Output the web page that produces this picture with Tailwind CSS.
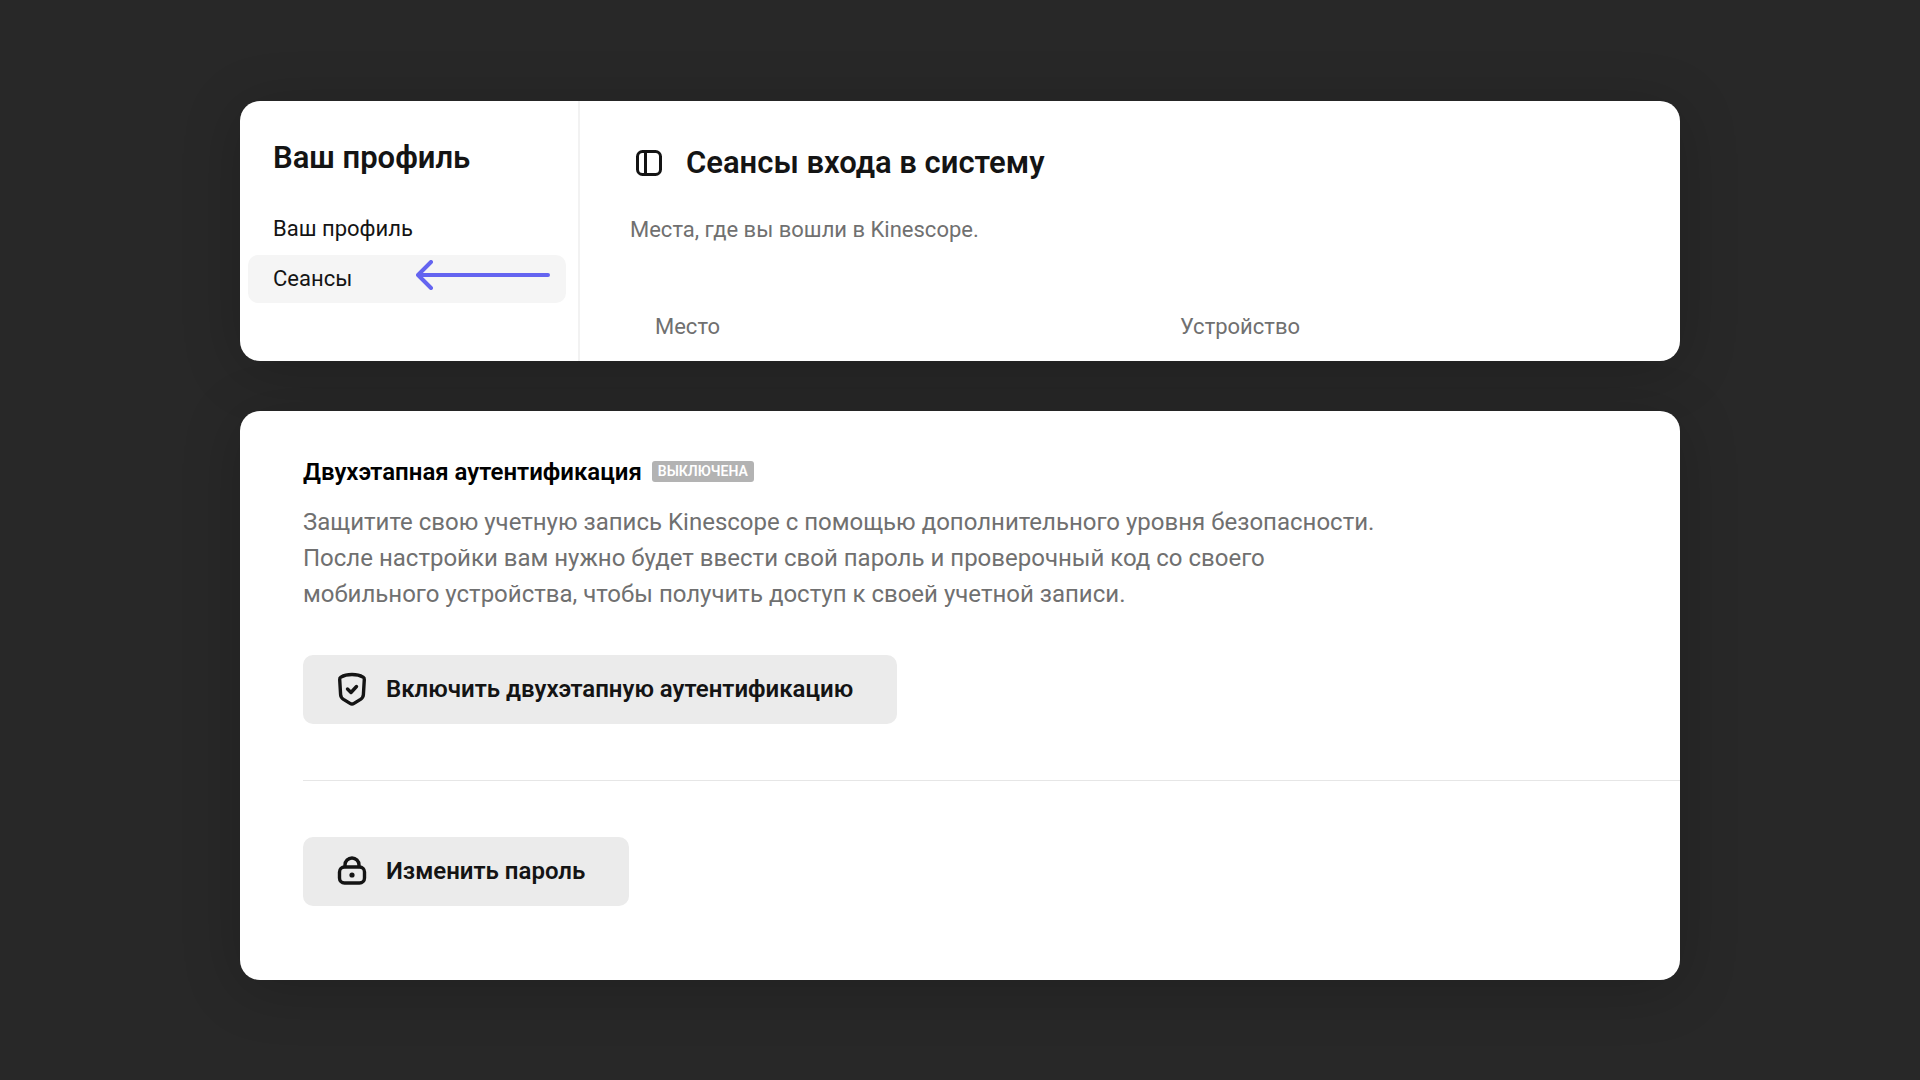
<!DOCTYPE html>
<html lang="ru">

<head>
    <meta charset="UTF-8">
    <meta name="viewport" content="width=device-width, initial-scale=1.0">
    <title>Сеансы входа в систему</title>
    <script src="https://cdn.jsdelivr.net/npm/@tailwindcss/browser@4"></script>
</head>

<body class="flex min-h-screen flex-col items-center justify-center gap-[50px] bg-[#282828] font-[Roboto,sans-serif] text-[#141414]">

    <!-- Profile: sidebar and sessions -->
    <section class="flex w-3/4 overflow-hidden rounded-[20px] bg-white shadow-[0_8px_60px_rgba(0,0,0,0.2)]">
        <aside class="w-[340px] shrink-0 border-r-2 border-[#f2f2f2] pt-9 pr-3 pb-[58px] pl-2">
            <h2 class="px-[25px] text-[31px] leading-[42px] font-semibold">Ваш профиль</h2>
            <nav class="mt-[26px] flex flex-col gap-0.5">
                <a href="#profile" class="flex h-12 items-center rounded-[10px] px-[25px] text-[22px]">Ваш профиль</a>
                <a href="#sessions" class="relative flex h-12 items-center rounded-[10px] bg-[#f5f5f5] px-[25px] text-[22px]">
                    Сеансы
                    <svg class="absolute top-[5px] right-4" width="134" height="30" viewBox="0 0 134 30" fill="none" stroke="#6464f0" stroke-width="4" stroke-linecap="round" stroke-linejoin="round" aria-hidden="true">
                        <path d="M15 2 2 15l13 13M3 15h129" />
                    </svg>
                </a>
            </nav>
        </aside>

        <main class="min-w-0 grow pt-[39px] pl-[50px]">
            <div class="flex items-center gap-6">
                <button type="button" aria-label="Боковая панель" class="pl-1.5">
                    <svg width="26" height="26" viewBox="1 1 26 26" fill="none" stroke="currentColor" stroke-width="3">
                        <rect x="2.5" y="2.5" width="23" height="23" rx="5" />
                        <path d="M10.5 2.5v23" />
                    </svg>
                </button>
                <h1 class="text-[31px] leading-[46px] font-semibold">Сеансы входа в систему</h1>
            </div>
            <p class="mt-7 text-[22px] leading-8 text-[#707070]">Места, где вы вошли в Kinescope.</p>
            <table class="mt-[65px] w-full table-fixed text-left text-[22px] leading-8 text-[#707070]">
                <thead>
                    <tr>
                        <th scope="col" class="w-[525px] pl-[25px] font-normal">Место</th>
                        <th scope="col" class="pl-[25px] font-normal">Устройство</th>
                    </tr>
                </thead>
            </table>
        </main>
    </section>

    <!-- Two-factor authentication and password -->
    <section class="w-3/4 rounded-[20px] bg-white pt-[45px] pb-[74px] pl-[63px] shadow-[0_8px_60px_rgba(0,0,0,0.2)]">
        <div class="flex items-center gap-2.5">
            <h2 class="text-2xl font-semibold text-black">Двухэтапная аутентификация</h2>
            <span class="rounded-[3px] bg-[#b3b3b3] px-1.5 text-[14px] leading-[21px] font-semibold text-white uppercase">Выключена</span>
        </div>
        <p class="mt-4 max-w-[1100px] text-2xl leading-9 text-[#707070]">
            Защитите свою учетную запись Kinescope с помощью дополнительного уровня безопасности.<br>
            После настройки вам нужно будет ввести свой пароль и проверочный код со своего<br>
            мобильного устройства, чтобы получить доступ к своей учетной записи.
        </p>
        <button type="button" class="mt-[43px] flex h-[69px] items-center gap-[18px] rounded-[10px] bg-[#ebebeb] pr-11 pl-[33px] text-2xl font-semibold">
            <svg width="32" height="36" viewBox="0 0 32 36" fill="none" stroke="currentColor" stroke-width="3.4" stroke-linecap="round" stroke-linejoin="round" aria-hidden="true">
                <path d="M16 3.500c4.300 0 8.200.9 11 2.600.9.500 1.400 1.400 1.300 2.500l-.9 14.900c-.1 2-1.200 3.800-2.900 4.900L18 32.400c-1.300.8-2.700.8-4 0l-6.500-4c-1.700-1.100-2.800-2.900-2.900-4.900L3.700 8.600c-.1-1.100.4-2 1.300-2.500 2.800-1.700 6.700-2.600 11-2.600z" />
                <path d="m11.500 18 3.500 3.500 5.500-6" />
            </svg>
            Включить двухэтапную аутентификацию
        </button>
        <hr class="mt-14 border-t border-[#e6e6e6]">
        <button type="button" class="mt-14 flex h-[69px] items-center gap-[18px] rounded-[10px] bg-[#ebebeb] pr-11 pl-[33px] text-2xl font-semibold">
            <svg width="32" height="36" viewBox="0 0 32 36" fill="none" stroke="currentColor" stroke-width="3.4" stroke-linecap="round" stroke-linejoin="round" aria-hidden="true">
                <rect x="3.500" y="14" width="25" height="16" rx="5" />
                <path d="M9 13.500V12a7 7 0 0 1 14 0v1.500" />
                <circle cx="16" cy="22" r="2.600" fill="currentColor" stroke="none" />
            </svg>
            Изменить пароль
        </button>
    </section>

</body>

</html>
